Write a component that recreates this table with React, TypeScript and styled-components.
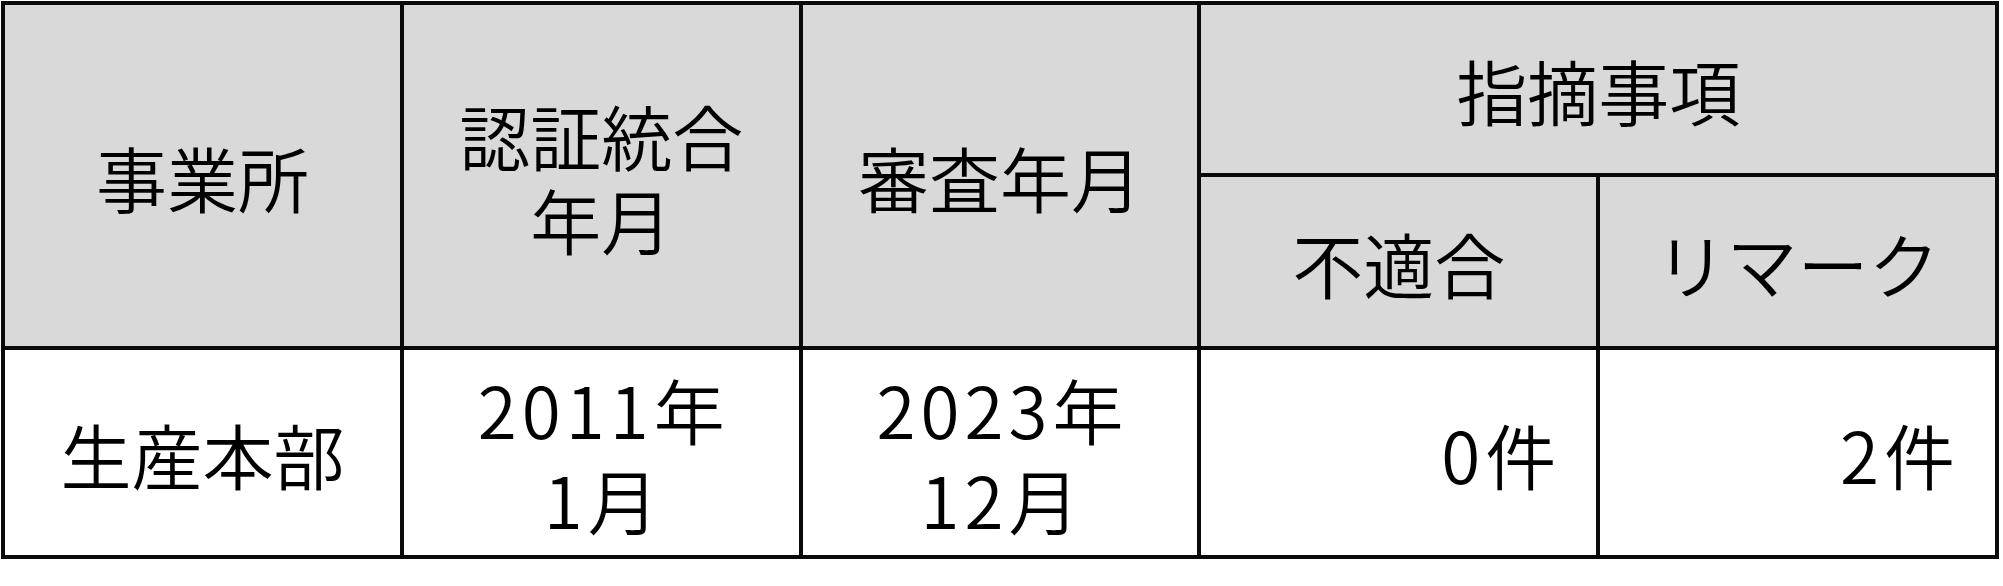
import styled, { createGlobalStyle } from "styled-components";

const GlobalStyle = createGlobalStyle`
  html, body {
    margin: 0;
    padding: 0;
    background: #ffffff;
  }
  body {
    font-family: "Noto Sans CJK JP", "Noto Sans", sans-serif;
    color: #000;
  }
`;

const Sheet = styled.table`
  margin: 1px;
  width: 1998px;
  border-collapse: collapse;
  table-layout: fixed;
  font-size: 71px;
  font-weight: 350;
  col {
    width: 20%;
  }
`;

const Row = styled.tr<{ $h: number }>`
  height: ${(p) => p.$h}px;
`;

const HeadCell = styled.th<{ $lh?: number }>`
  background: #d9d9d9;
  border: 4px solid #0a0a0a;
  padding: 0;
  font-weight: 350;
  text-align: center;
  vertical-align: middle;
  line-height: ${(p) => p.$lh ?? 84}px;
`;

const BodyCell = styled.td<{ $align?: "center" | "right"; $lh?: number }>`
  background: #ffffff;
  border: 4px solid #0a0a0a;
  padding: ${(p) => (p.$align === "right" ? "0 40px 0 0" : "0")};
  text-align: ${(p) => p.$align ?? "center"};
  vertical-align: middle;
  line-height: ${(p) => p.$lh ?? 90}px;
`;

const Line = styled.span`
  display: block;
`;

const Num = styled.span`
  letter-spacing: 5px;
`;

const App = () => {
  return (
    <>
      <GlobalStyle />
      <Sheet>
        <colgroup>
          <col />
          <col />
          <col />
          <col />
          <col />
        </colgroup>
        <thead>
          <Row $h={172}>
            <HeadCell rowSpan={2}>事業所</HeadCell>
            <HeadCell rowSpan={2}>
              <Line>認証統合</Line>
              <Line>年月</Line>
            </HeadCell>
            <HeadCell rowSpan={2}>審査年月</HeadCell>
            <HeadCell colSpan={2}>指摘事項</HeadCell>
          </Row>
          <Row $h={173}>
            <HeadCell>不適合</HeadCell>
            <HeadCell>リマーク</HeadCell>
          </Row>
        </thead>
        <tbody>
          <Row $h={209}>
            <BodyCell>生産本部</BodyCell>
            <BodyCell>
              <Line>
                <Num>2011</Num>年
              </Line>
              <Line>
                <Num>1</Num>月
              </Line>
            </BodyCell>
            <BodyCell>
              <Line>
                <Num>2023</Num>年
              </Line>
              <Line>
                <Num>12</Num>月
              </Line>
            </BodyCell>
            <BodyCell $align="right">
              <Num>0</Num>件
            </BodyCell>
            <BodyCell $align="right">
              <Num>2</Num>件
            </BodyCell>
          </Row>
        </tbody>
      </Sheet>
    </>
  );
};

export default App;
